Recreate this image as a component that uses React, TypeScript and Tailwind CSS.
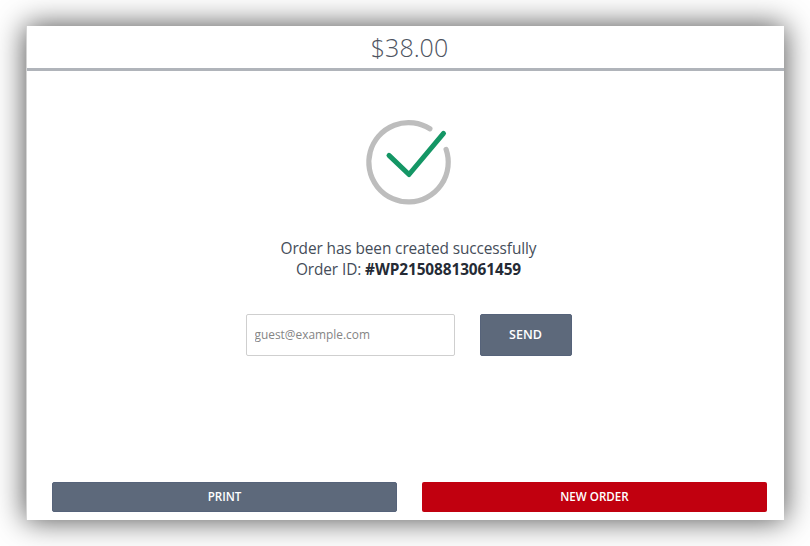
const fontStack = "font-['Open_Sans','Noto_Sans',sans-serif]";

function SuccessMark() {
  return (
    <svg className="block h-[88px] w-[88px]" viewBox="0 0 88 88" fill="none" strokeLinecap="round" strokeLinejoin="round">
      <path d="M64.9 10.8A39.7 39.7 0 1 0 81.1 31.4" stroke="#bdbdbd" strokeWidth="5.2" />
      <path d="M24 37.4L44 56.5L78.5 15.4" stroke="#149665" strokeWidth="5" />
    </svg>
  );
}

export default function App() {
  return (
    <div className={`h-[546px] w-[810px] overflow-hidden bg-white pl-[26px] pt-[26px] ${fontStack}`}>
      <main className="flex h-[494px] w-[758px] flex-col border-l border-[#d4d4d4] bg-white shadow-[0_0_28px_1px_rgba(0,0,0,0.68)]">
        <header className="flex h-[45px] shrink-0 items-center justify-center border-b-[3px] border-[#b0b4ba] pl-[8px] pt-[1px] text-[25px] font-light leading-none text-[#4e5461]">
          <span>$38.00</span>
        </header>
        <section className="flex flex-1 flex-col items-center pl-[6px] pt-[47px]">
          <SuccessMark />
          <div className="mt-[32px] text-center text-[15.4px] leading-[21px] tracking-[-0.1px] text-[#454d59]">
            <p>Order has been created successfully</p>
            <p>
              Order ID: <strong className="font-bold text-[#252b35]">#WP21508813061459</strong>
            </p>
          </div>
          <form className="mt-[34px] flex gap-[25px]" onSubmit={(e) => e.preventDefault()}>
            <input
              aria-label="Email"
              className="h-[42px] w-[209px] rounded-[2px] border border-[#cfcfcf] px-[8px] pb-[2px] text-[11.9px] text-[#777] outline-none placeholder:text-[#858585]"
              placeholder="guest@example.com"
            />
            <button className="h-[42px] w-[92px] rounded-[2px] border border-[#56637a] bg-[#5d697b] text-[12.5px] font-semibold text-white">
              SEND
            </button>
          </form>
        </section>
        <footer className="flex shrink-0 gap-[25px] pb-[8px] pl-[25px] text-[11.6px] font-semibold text-white">
          <button className="h-[30px] w-[345px] rounded-[2px] border border-[#56637a] bg-[#5d697b]">PRINT</button>
          <button className="h-[30px] w-[345px] rounded-[2px] bg-[#c1000f]">NEW ORDER</button>
        </footer>
      </main>
    </div>
  );
}
